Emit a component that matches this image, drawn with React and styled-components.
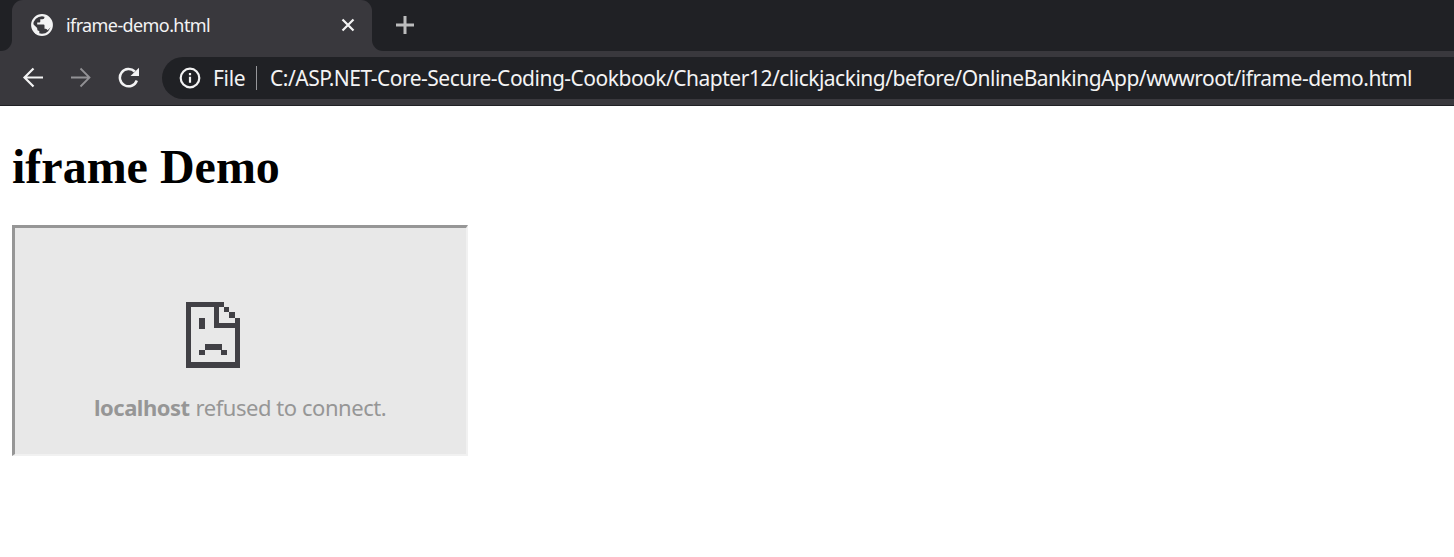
import React from 'react';
import styled, { createGlobalStyle } from 'styled-components';

const GlobalStyle = createGlobalStyle`
  * { box-sizing: border-box; }
  html, body { margin: 0; background: #fff; overflow: hidden; }
`;

const uiFont = '"Noto Sans", "Open Sans", sans-serif';

const Browser = styled.div`
  display: flex;
  flex-direction: column;
  width: 100%;
  height: 557px;
  overflow: hidden;
  background: #fff;
  font-family: ${uiFont};
`;

const TabStrip = styled.header`
  display: flex;
  height: 51px;
  background: #202125;
`;

const StripEdge = styled.div`
  width: 12px;
  background: #39383d;
  &::before {
    content: '';
    display: block;
    height: 100%;
    background: #202125;
    border-bottom-right-radius: 11px;
  }
`;

const Tab = styled.div`
  display: flex;
  align-items: center;
  width: 360px;
  padding: 0 17px 2px 19px;
  background: #39383d;
  border-radius: 11px 11px 0 0;
  color: #f3f3f4;
`;

const StripRest = styled.div`
  flex: 1;
  background: #39383d;
`;

const StripFill = styled.div`
  display: flex;
  align-items: center;
  height: 100%;
  padding: 0 0 1px 24px;
  background: #202125;
  border-bottom-left-radius: 11px;
`;

const Label = styled.span`
  display: block;
  white-space: nowrap;
  font-size: ${(p) => p.$size}px;
  letter-spacing: ${(p) => p.$spacing || 0}px;
  line-height: 28px;
  font-weight: ${(p) => p.$weight || 400};
`;

const TabTitle = styled(Label)`
  flex: 1;
  margin-left: 13px;
`;

const Icon = styled.svg`
  display: block;
  flex: none;
  width: ${(p) => p.$w}px;
  height: ${(p) => p.$h || p.$w}px;
  fill: none;
  stroke: ${(p) => p.$color || '#f3f3f4'};
  stroke-width: ${(p) => p.$stroke || 2.2};
`;

const Toolbar = styled.nav`
  display: flex;
  align-items: center;
  height: 55px;
  padding: 0 0 1px 22px;
  background: #39383d;
  border-bottom: 1px solid #202125;
`;

const NavButtons = styled.div`
  display: flex;
  gap: 26px;
  width: 140px;
`;

const AddressBar = styled.div`
  display: flex;
  align-items: center;
  flex: 1;
  height: 42px;
  padding-left: 17px;
  background: #202125;
  border-radius: 21px 0 0 21px;
  color: #f3f3f4;
`;

const Scheme = styled(Label)`
  width: 55px;
  padding-left: 12px;
`;

const Divider = styled.div`
  width: 1px;
  height: 24px;
  margin-right: 13px;
  background: #96969a;
`;

const Page = styled.main`
  padding: 33px 12px 0;
`;

const Heading = styled.h1`
  margin: 0 0 31px;
  font: bold 48px/55px "Liberation Serif", "Times New Roman", serif;
  color: #000;
`;

const Frame = styled.section`
  display: flex;
  flex-direction: column;
  width: 456px;
  height: 231px;
  padding: 74px 0 0 79px;
  background: #e8e8e8;
  border: solid;
  border-width: 3px 2px 2px 3px;
  border-color: #969696 #f1f1f1 #f1f1f1 #969696;
`;

const SadPage = styled(Icon)`
  margin-left: 92px;
  fill: #414045;
  stroke: none;
`;

const Message = styled.p`
  display: flex;
  gap: 6px;
  margin: 25px 0 0;
  color: #969696;
`;

export default function App() {
  return (
    <Browser>
      <GlobalStyle />
      <TabStrip>
        <StripEdge />
        <Tab>
          <Icon $w={22} viewBox="0 0 22 22">
            <circle cx="11" cy="11" r="9.8" />
            <path fill="#f3f3f4" stroke="none" d="M13.5 1.5v1.8q0 2-2.1 2H9.3v2.1q0 1-1 1H6.2v2.2h6.3q1 0 1 1v3.2h1.1q1.5 0 2 1.5L20 13l.8-4-3-5zM1.5 9.5 6.2 14v1.1q0 2 2.1 2V21l-4-1.5L1 14z" />
          </Icon>
          <TabTitle $size={18} $spacing={-0.6}>iframe-demo.html</TabTitle>
          <Icon $w={14} viewBox="0 0 14 14"><path d="m1.5 1.5 11 11m0-11-11 11" /></Icon>
        </Tab>
        <StripRest>
          <StripFill>
            <Icon $w={18} $color="#bcbcbd" $stroke={3} viewBox="0 0 18 18"><path d="M9 0v18M0 9h18" /></Icon>
          </StripFill>
        </StripRest>
      </TabStrip>
      <Toolbar>
        <NavButtons>
          <Icon $w={22} viewBox="0 0 22 22"><path d="M21 10.5H2.5m9-9-9 9 9 9" /></Icon>
          <Icon $w={22} $color="#929195" $stroke={1.8} viewBox="0 0 22 22"><path d="M1 10.5h18.5m-9-9 9 9-9 9" /></Icon>
          <Icon $w={22} $stroke={2.5} viewBox="0 0 22 22">
            <path d="M18.8 13.5a8.7 8.7 0 1 1-2-9" />
            <path fill="#f3f3f4" stroke="none" d="M21 .8V9h-8.5z" />
          </Icon>
        </NavButtons>
        <AddressBar>
          <Icon $w={22} viewBox="0 0 22 22">
            <circle cx="11" cy="11" r="9.3" />
            <path d="M11 9.8v6M11 6v2.3" />
          </Icon>
          <Scheme $size={21} $spacing={-0.3}>File</Scheme>
          <Divider />
          <Label $size={21} $spacing={-0.5}>C:/ASP.NET-Core-Secure-Coding-Cookbook/Chapter12/clickjacking/before/OnlineBankingApp/wwwroot/iframe-demo.html</Label>
        </AddressBar>
      </Toolbar>
      <Page>
        <Heading>iframe Demo</Heading>
        <Frame>
          <SadPage $w={54} $h={66} viewBox="0 0 54 66">
            <path fillRule="evenodd" d="M0 0h38v5h-5v16h16v-5h5v50H0zM5 5v55h44V26H28V5z" />
            <path d="M38 5h5v5h-5zM43 10h6v6h-6zM13 16h6v11h-6zM19 42h17v6H19zM13 48h6v5h-6zM35 48h6v5h-6z" />
          </SadPage>
          <Message>
            <Label as="strong" $size={22} $weight={700} $spacing={-0.5}>localhost</Label>
            <Label $size={22} $spacing={-0.45}>refused to connect.</Label>
          </Message>
        </Frame>
      </Page>
    </Browser>
  );
}
